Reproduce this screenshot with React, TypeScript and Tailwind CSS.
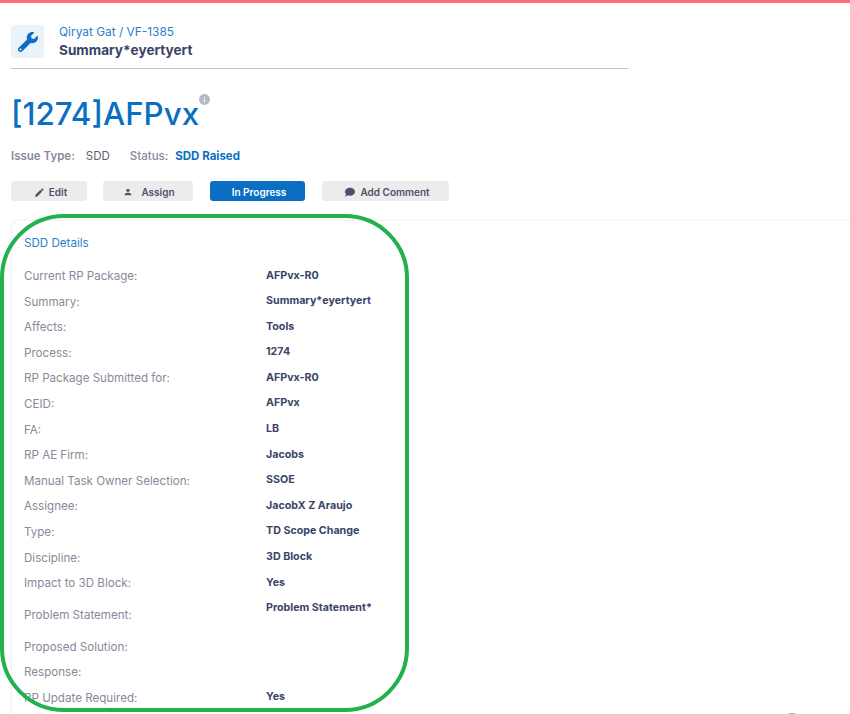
import { MdEdit, MdPerson, MdInfo } from "react-icons/md";
import { FaWrench, FaComment } from "react-icons/fa";

const rows: [string, string][] = [
  ["Current RP Package:", "AFPvx-R0"],
  ["Summary:", "Summary*eyertyert"],
  ["Affects:", "Tools"],
  ["Process:", "1274"],
  ["RP Package Submitted for:", "AFPvx-R0"],
  ["CEID:", "AFPvx"],
  ["FA:", "LB"],
  ["RP AE Firm:", "Jacobs"],
  ["Manual Task Owner Selection:", "SSOE"],
  ["Assignee:", "JacobX Z Araujo"],
  ["Type:", "TD Scope Change"],
  ["Discipline:", "3D Block"],
  ["Impact to 3D Block:", "Yes"],
];

function Row({ label, value, tall }: { label: string; value: string; tall?: boolean }) {
  return (
    <div className={`flex ${tall ? "h-[38px] pt-[8px]" : "h-[25.6px] pt-[2px]"}`}>
      <div className="w-[242px] text-[11.6px] leading-[20px] text-[#878a99] shrink-0">{label}</div>
      <div className={`text-[10.7px] font-bold leading-[18px] text-[#3a4468] ${tall ? "-mt-[6px]" : "mt-[0.5px]"}`}>{value}</div>
    </div>
  );
}

export default function App() {
  return (
    <div className="relative h-[714px] w-[850px] overflow-hidden bg-white font-['Inter',sans-serif]">
      <div className="h-[3px] bg-[#ff6b78]" />

      {/* header */}
      <div className="ml-[11px] w-[617px] border-b border-[#c4c4c4] pt-[21px] h-[66px]">
        <div className="flex items-center">
          <div className="flex h-[33px] w-[33px] items-center justify-center rounded bg-[#eaf2fa]">
            <FaWrench size={20} className="text-[#0a6fc2]" />
          </div>
          <div className="ml-[15px]">
            <div className="text-[11.9px] leading-[16px] text-[#2a7fc9]">Qiryat Gat / VF-1385</div>
            <div className="mt-[1px] text-[13.6px] font-bold leading-[18px] text-[#3a4468]">Summary*eyertyert</div>
          </div>
        </div>
      </div>

      {/* title */}
      <div className="ml-[11px] mt-[24px] flex h-[42px] items-start">
        <h1 className="text-[31.3px] font-medium leading-[42px] text-[#0a6fc2]">[1274]AFPvx</h1>
        <MdInfo size={13} className="ml-[-1px] mt-[0px] text-[#b5b9c6]" />
      </div>

      {/* meta */}
      <div className="ml-[11px] mt-[13px] flex h-[18px] items-center text-[11.5px]">
        <span className="font-semibold text-[#878a99]">Issue Type:</span>
        <span className="ml-[11px] text-[#5b5f6b]">SDD</span>
        <span className="ml-[20px] font-medium text-[#878a99]">Status:</span>
        <span className="ml-[7px] font-bold text-[#0a6fc2]">SDD Raised</span>
      </div>

      {/* actions */}
      <div className="ml-[11px] mt-[15px] flex text-[10px] font-semibold text-[#4b5268]">
        <button className="flex h-[20px] w-[76px] items-center justify-center gap-[4px] rounded-[3px] bg-[#ececed] pl-[3px] pt-[2px]">
          <MdEdit size={11} />
          Edit
        </button>
        <button className="ml-[16px] flex h-[20px] w-[90px] items-center justify-center gap-[8px] rounded-[3px] bg-[#ececed] pl-[2px] pt-[2px]">
          <MdPerson size={10} />
          Assign
        </button>
        <button className="ml-[17px] flex h-[20px] w-[95px] items-center justify-center rounded-[3px] bg-[#0a6fc2] pl-[3px] pt-[2px] text-white">
          In Progress
        </button>
        <button className="ml-[17px] flex h-[20px] w-[127px] items-center justify-center gap-[5px] rounded-[3px] bg-[#ececed] pl-[4px] pt-[2px]">
          <FaComment size={10} />
          Add Comment
        </button>
      </div>

      {/* details card */}
      <div className="ml-[11px] mt-[19px] h-[600px] rounded-tl-[8px] border-t border-l border-[#f3f3f5] pl-[12px] pt-[13px] shadow-[0_0_3px_rgba(0,0,0,0.05)]">
        <div className="text-[11.6px] leading-[18px] text-[#2a7fc9]">SDD Details</div>
        <div className="mt-[12px]">
          {rows.map(([label, value]) => (
            <Row key={label} label={label} value={value} />
          ))}
          <Row label="Problem Statement:" value="Problem Statement*" tall />
          <Row label="Proposed Solution:" value="" />
          <Row label="Response:" value="" />
          <Row label="RP Update Required:" value="Yes" />
        </div>
      </div>

      {/* green annotation */}
      <div className="absolute left-[0px] top-[214px] h-[498px] w-[409px] rounded-[64px] border-[4px] border-[#22b14c]" />
      <div className="absolute left-[789px] top-[713px] h-px w-[6px] bg-[#b0b0b0]" />
    </div>
  );
}
